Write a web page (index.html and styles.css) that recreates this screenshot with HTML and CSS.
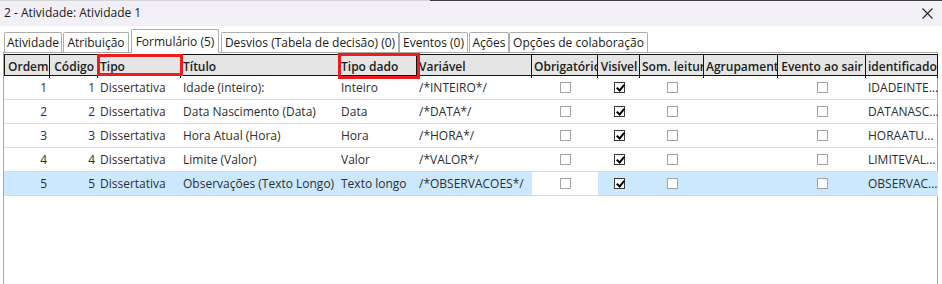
FILE: index.html
```html
<!DOCTYPE html>
<html lang="pt">
<head>
<meta charset="utf-8">
<title>2 - Atividade: Atividade 1</title>
<link rel="stylesheet" href="styles.css">
</head>
<body>
<div class="window">
  <div class="titlebar">
    <span class="title">2 - Atividade: Atividade 1</span>
    <svg class="close" width="11" height="11" viewBox="0 0 11 11"><path d="M0.5 0.5 L10.5 10.5 M10.5 0.5 L0.5 10.5" stroke="#222" stroke-width="1.1" fill="none"/></svg>
  </div>
  <div class="tabs">
    <div class="tab t1">Atividade</div>
    <div class="tab t2">Atribuição</div>
    <div class="tab t3 active">Formulário (5)</div>
    <div class="tab t4">Desvios (Tabela de decisão) (0)</div>
    <div class="tab t5">Eventos (0)</div>
    <div class="tab t6">Ações</div>
    <div class="tab t7">Opções de colaboração</div>
  </div>
  <div class="panel">
    <div class="row head">
      <div class="c pl3">Ordem</div>
      <div class="c ar">Código</div>
      <div class="c">Tipo</div>
      <div class="c">Título</div>
      <div class="c">Tipo dado</div>
      <div class="c">Variável</div>
      <div class="c">Obrigatório</div>
      <div class="c ac">Visível</div>
      <div class="c">Som. leitura</div>
      <div class="c">Agrupamento</div>
      <div class="c ac">Evento ao sair</div>
      <div class="c last">identificador</div>
      <span class="mark mark-tipo"></span>
      <span class="mark mark-tipodado"></span>
    </div>

    <div class="row">
      <div class="c ar">1</div><div class="c ar">1</div><div class="c">Dissertativa</div><div class="c">Idade (inteiro):</div><div class="c">Inteiro</div><div class="c">/*INTEIRO*/</div>
      <div class="c ac"><span class="cb"></span></div><div class="c ac"><span class="cb on"></span></div><div class="c ac"><span class="cb"></span></div><div class="c"></div><div class="c ac"><span class="cb"></span></div><div class="c">IDADEINTE...</div>
    </div>
    <div class="row">
      <div class="c ar">2</div><div class="c ar">2</div><div class="c">Dissertativa</div><div class="c">Data Nascimento (Data)</div><div class="c">Data</div><div class="c">/*DATA*/</div>
      <div class="c ac"><span class="cb"></span></div><div class="c ac"><span class="cb on"></span></div><div class="c ac"><span class="cb"></span></div><div class="c"></div><div class="c ac"><span class="cb"></span></div><div class="c">DATANASC...</div>
    </div>
    <div class="row">
      <div class="c ar">3</div><div class="c ar">3</div><div class="c">Dissertativa</div><div class="c">Hora Atual (Hora)</div><div class="c">Hora</div><div class="c">/*HORA*/</div>
      <div class="c ac"><span class="cb"></span></div><div class="c ac"><span class="cb on"></span></div><div class="c ac"><span class="cb"></span></div><div class="c"></div><div class="c ac"><span class="cb"></span></div><div class="c">HORAATU...</div>
    </div>
    <div class="row">
      <div class="c ar">4</div><div class="c ar">4</div><div class="c">Dissertativa</div><div class="c">Limite (Valor)</div><div class="c">Valor</div><div class="c">/*VALOR*/</div>
      <div class="c ac"><span class="cb"></span></div><div class="c ac"><span class="cb on"></span></div><div class="c ac"><span class="cb"></span></div><div class="c"></div><div class="c ac"><span class="cb"></span></div><div class="c">LIMITEVAL...</div>
    </div>
    <div class="row selected">
      <div class="c ar">5</div><div class="c ar">5</div><div class="c">Dissertativa</div><div class="c">Observações (Texto Longo)</div><div class="c">Texto longo</div><div class="c">/*OBSERVACOES*/</div>
      <div class="c ac focus"><span class="cb"></span></div><div class="c ac"><span class="cb on"></span></div><div class="c ac"><span class="cb"></span></div><div class="c"></div><div class="c ac"><span class="cb"></span></div><div class="c">OBSERVAC...</div>
    </div>
  </div>
</div>
</body>
</html>
```

FILE: styles.css
```css
* { box-sizing: border-box; }

html, body {
  margin: 0;
  padding: 0;
  background: #ffffff;
}

body {
  font-family: "Open Sans", "Noto Sans", "DejaVu Sans", sans-serif;
  font-size: 12px;
  color: #1e1e1e;
  width: 942px;
  height: 284px;
  overflow: hidden;
}

.window {
  width: 942px;
  height: 284px;
}

/* title bar */
.titlebar {
  height: 26px;
  display: flex;
  align-items: center;
  padding-left: 4px;
  padding-right: 9px;
  background-color: #f2eff6;
  background-image: linear-gradient(to right, #d6d6d6 430px, #3c3c3c 430px);
  background-size: 100% 1px;
  background-repeat: no-repeat;
  background-position: top left;
}

.title {
  font-size: 12px;
  color: #1a1a1a;
  line-height: 16px;
}

.close {
  margin-left: auto;
  display: block;
}

/* tabs */
.tabs {
  height: 26px;
  display: flex;
  align-items: flex-end;
  position: relative;
  z-index: 2;
}

.tab {
  height: 20px;
  border: 1px solid #adadad;
  border-bottom: none;
  border-radius: 2px 2px 0 0;
  background: #ffffff;
  display: flex;
  align-items: center;
  justify-content: center;
  padding-top: 1px;
  white-space: nowrap;
  color: #1a1a1a;
  line-height: 16px;
}

.tab.active {
  height: 24px;
  margin-bottom: -1px;
  padding-bottom: 1px;
}

.t1 { margin-left: 4px; width: 58px; }
.t2 { margin-left: 1px; width: 66px; }
.t3 { margin-left: 2px; width: 88px; }
.t4 { margin-left: 2px; width: 178px; }
.t5 { margin-left: 0; width: 69px; }
.t6 { margin-left: 1px; width: 40px; }
.t7 { margin-left: 0; width: 139px; }

/* panel + grid */
.panel {
  margin-left: 3px;
  width: 935px;
  height: 240px;
  border: 1px solid #a8a8a8;
  border-bottom: none;
  padding-top: 1px;
}

.row {
  display: grid;
  grid-template-columns: 45px 48px 83px 158px 78px 115px 66px 42px 64px 74px 88px 72px;
  width: 934px;
  height: 24px;
  padding-left: 1px;
  border-bottom: 1px solid #dadada;
  align-items: center;
  color: #2e2e2e;
}

.row.head {
  position: relative;
  height: 22px;
  padding-left: 0;
  border: 1px solid #141414;
  border-right: none;
  background: #e5e5e5;
  font-weight: 600;
  color: #202020;
  align-items: stretch;
}

.c {
  overflow: hidden;
  white-space: nowrap;
  padding: 0 2px;
  line-height: 16px;
}

.head .c {
  border-right: 1px solid #141414;
  display: flex;
  align-items: center;
  padding: 0 1px 0 2px;
}

.head .c.ar { justify-content: flex-end; padding-right: 3px; }
.head .c.ac { justify-content: center; }
.head .c.pl3 { padding-left: 3px; }

.ar { text-align: right; padding-right: 3px; }
.ac { text-align: center; display: flex; justify-content: center; align-items: center; height: 23px; }

.row.selected { background: #cce8ff; }
.row.selected .focus { background: #ffffff; }

/* red highlight boxes over header cells */
.mark {
  position: absolute;
  border: 3px solid #ee1c1c;
  pointer-events: none;
}

.mark-tipo {
  left: 92px;
  top: -1px;
  width: 86px;
  height: 22px;
}

.mark-tipodado {
  left: 333px;
  top: -2px;
  width: 82px;
  height: 26px;
}

/* checkboxes */
.cb {
  display: block;
  width: 11px;
  height: 11px;
  border: 1px solid #a3a3a3;
  background: #ffffff;
  position: relative;
}

.cb.on {
  border-color: #3a3a3a;
}

.cb.on::after {
  content: "";
  position: absolute;
  left: 3px;
  top: 0px;
  width: 3px;
  height: 6px;
  border-right: 2px solid #000;
  border-bottom: 2px solid #000;
  transform: rotate(40deg);
}
```
